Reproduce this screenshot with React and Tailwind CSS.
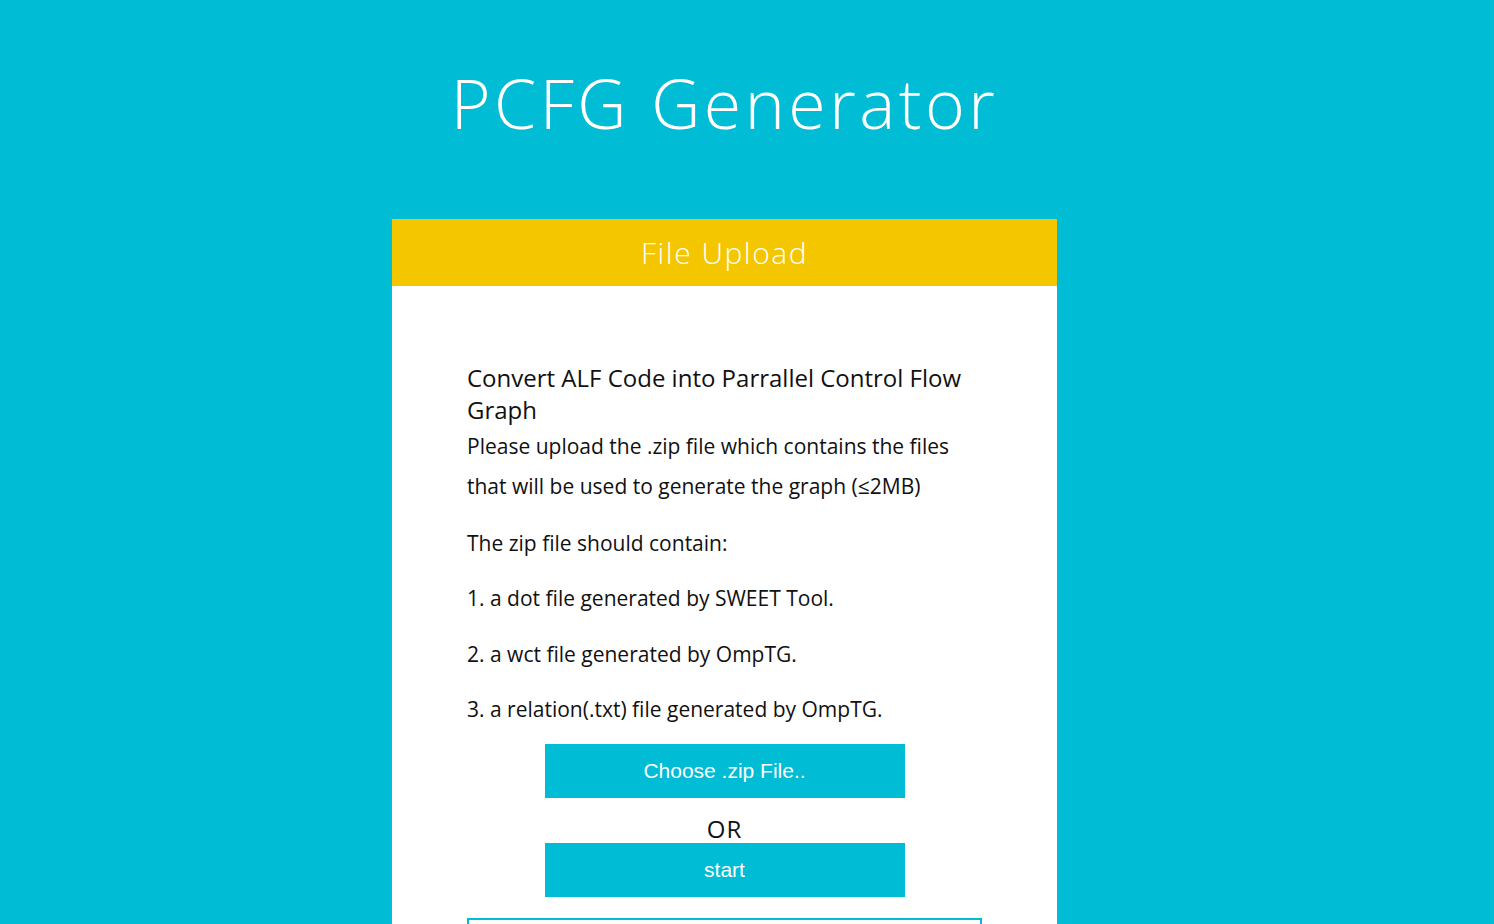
export default function App() {
  const body = { fontFamily: '"Open Sans", "Noto Sans", sans-serif' };
  const title = { fontFamily: '"Open Sans", "DejaVu Sans", sans-serif' };
  const btn = { fontFamily: '"Liberation Sans", Arial, sans-serif' };
  return (
    <div className="min-h-[924px] w-full bg-[#00bcd4] overflow-hidden">
      <div className="h-[924px] flex flex-col items-center pr-[45px]">
        <h1 style={title} className="mt-[58px] text-[68px] leading-[90px] font-light text-white tracking-[3.5px]">
          PCFG Generator
        </h1>
        <div className="mt-[71px] w-[665px] bg-white flex-1">
          <div style={title} className="h-[67px] bg-[#f3c600] flex items-center justify-center text-white text-[30px] font-light tracking-[1.5px]">
            File Upload
          </div>
          <div style={body} className="px-[75px] pt-[76px] text-[#111]">
            <h2 className="text-[24px] leading-[32px] font-normal">
              Convert ALF Code into Parrallel Control Flow Graph
            </h2>
            <p className="text-[21px] leading-[40px]">
              Please upload the .zip file which contains the files that will be used to generate the graph (≤2MB)
            </p>
            <p className="text-[21px] leading-[28px] mt-[23px]">The zip file should contain:</p>
            <p className="text-[21px] leading-[28px] mt-[27px]">1. a dot file generated by SWEET Tool.</p>
            <p className="text-[21px] leading-[28px] mt-[28px]">2. a wct file generated by OmpTG.</p>
            <p className="text-[21px] leading-[28px] mt-[27px]">3. a relation(.txt) file generated by OmpTG.</p>
            <div className="flex flex-col items-center mt-[21px]">
              <button style={btn} className="w-[360px] h-[54px] bg-[#00bcd4] text-white text-[21px]">
                Choose .zip File..
              </button>
              <div style={title} className="mt-[16px] text-[24px] leading-[30px] text-[#111] tracking-[1px]">OR</div>
              <button style={btn} className="mt-[-1px] w-[360px] h-[54px] bg-[#00bcd4] text-white text-[21px]">
                start
              </button>
            </div>
            <div className="mt-[21px] h-[60px] border-2 border-[#00bcd4]"></div>
          </div>
        </div>
      </div>
    </div>
  );
}
